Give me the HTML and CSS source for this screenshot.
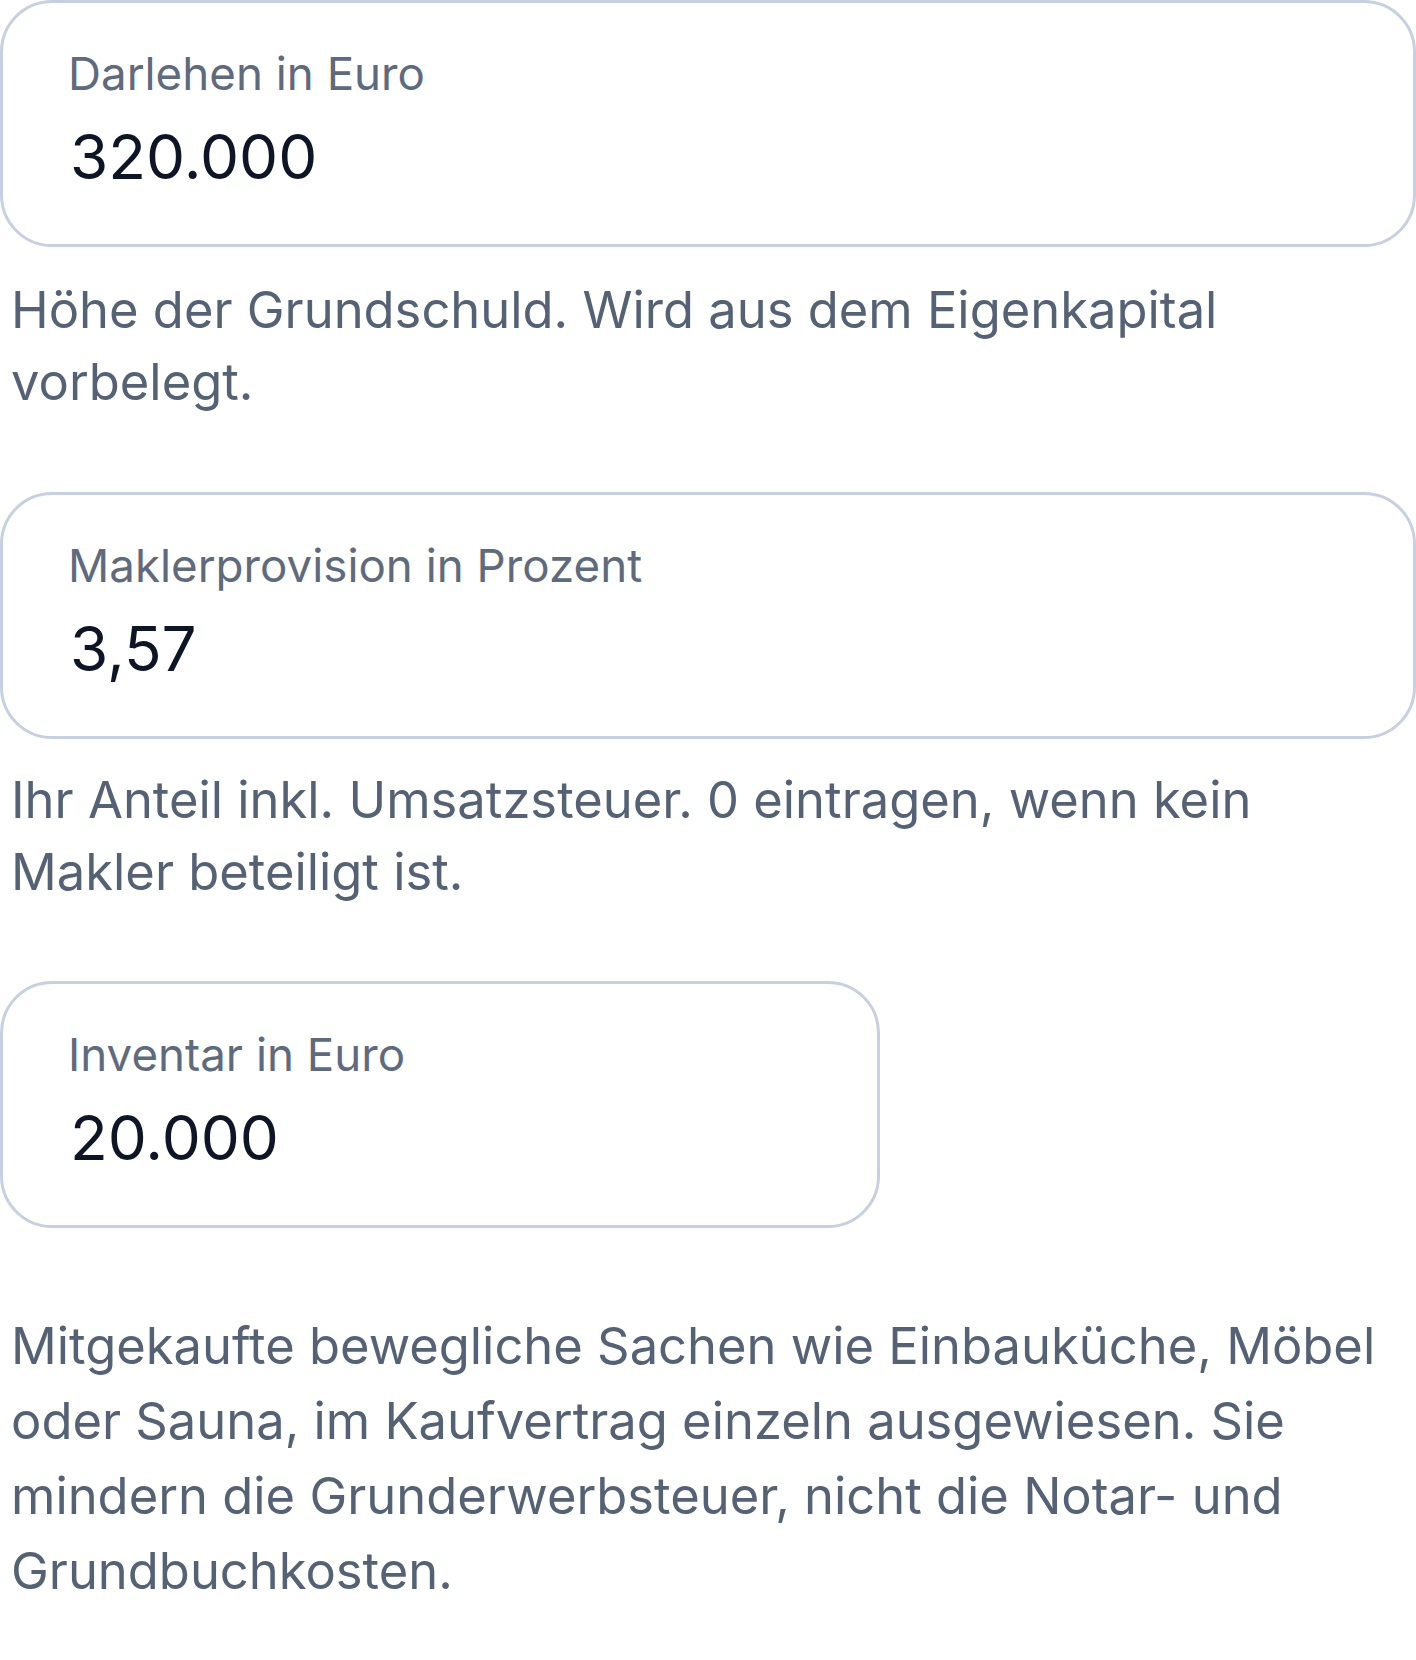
FILE: index.html
```html
<!DOCTYPE html>
<html lang="de">
<head>
<meta charset="utf-8">
<title>Kaufnebenkosten</title>
<link rel="stylesheet" href="styles.css">
</head>
<body>
<main class="form">
  <section class="field field-first">
    <div class="box">
      <div class="label">Darlehen in Euro</div>
      <div class="value">320.000</div>
    </div>
    <p class="help">Höhe der Grundschuld. Wird aus dem Eigenkapital vorbelegt.</p>
  </section>
  <section class="field field-second">
    <div class="box">
      <div class="label">Maklerprovision in Prozent</div>
      <div class="value">3,57</div>
    </div>
    <p class="help">Ihr Anteil inkl. Umsatzsteuer. 0 eintragen, wenn kein Makler beteiligt ist.</p>
  </section>
  <section class="field field-narrow">
    <div class="box">
      <div class="label">Inventar in Euro</div>
      <div class="value">20.000</div>
    </div>
  </section>
  <p class="help help-long">Mitgekaufte bewegliche Sachen wie Einbauküche, Möbel oder Sauna, im Kaufvertrag einzeln ausgewiesen. Sie mindern die Grunderwerbsteuer, nicht die Notar- und Grundbuchkosten.</p>
</main>
</body>
</html>
```

FILE: styles.css
```css
html, body {
  margin: 0;
  padding: 0;
  background: #ffffff;
}

body {
  font-family: Inter, "Noto Sans", "Liberation Sans", sans-serif;
  width: 1416px;
}

.form {
  display: flex;
  flex-direction: column;
}

.field {
  display: flex;
  flex-direction: column;
}

.field-second {
  margin-top: 74px;
}

.field-second .help {
  margin-top: 25px;
}

.field-narrow {
  margin-top: 73px;
}

.box {
  box-sizing: border-box;
  height: 247px;
  border: 3px solid #c7d0e0;
  border-radius: 52px;
  padding: 43px 20px 0 65px;
  background: #ffffff;
}

.field-narrow .box {
  width: 880px;
}

.label {
  font-size: 45.7px;
  line-height: 56px;
  color: #5e6a7e;
  white-space: nowrap;
}

.value {
  margin-top: 17px;
  padding-left: 2px;
  font-size: 62px;
  line-height: 76px;
  color: #0d1526;
  white-space: nowrap;
}

.help {
  margin: 27px 0 0 0;
  padding: 0 22px 0 11px;
  font-size: 50.7px;
  line-height: 72px;
  color: #556276;
}

.help-long {
  margin-top: 80px;
  line-height: 75px;
}
```
